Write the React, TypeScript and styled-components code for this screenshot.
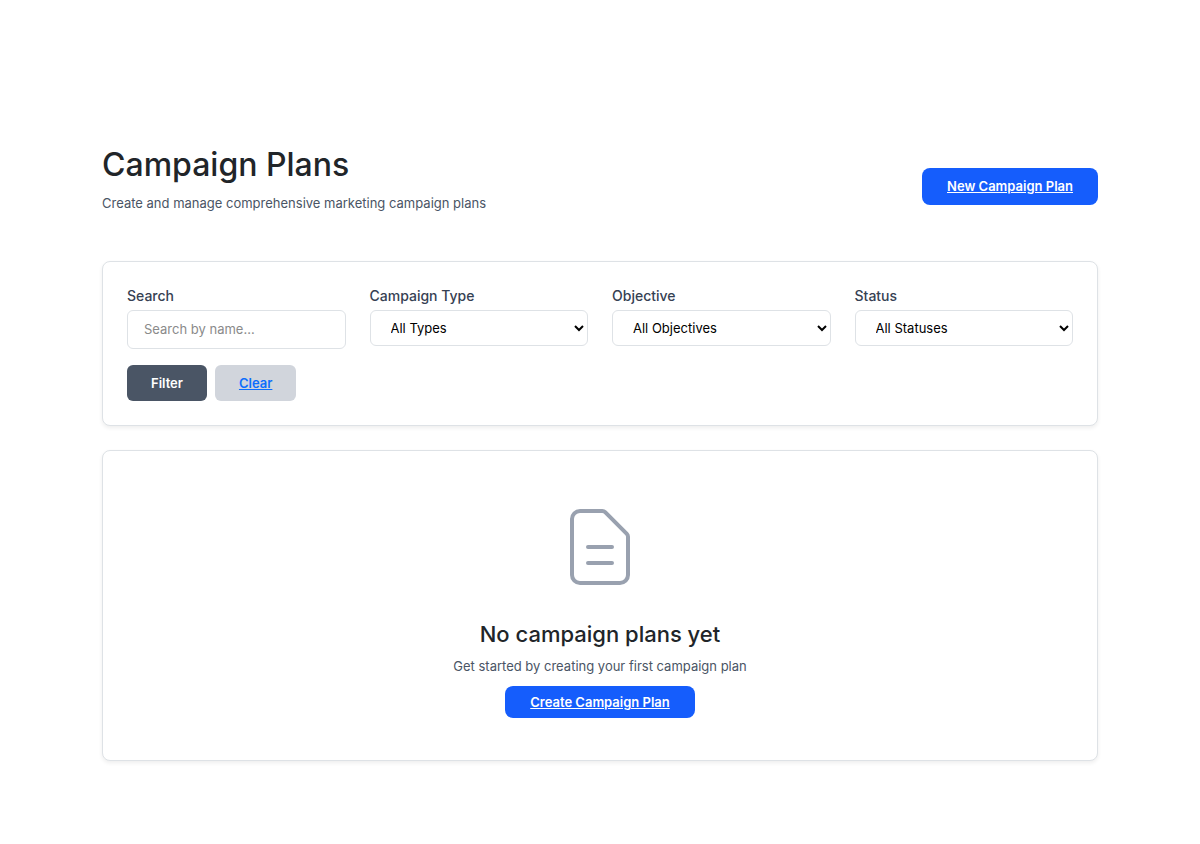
import React from 'react';
import styled, { createGlobalStyle, css } from 'styled-components';

const GlobalStyle = createGlobalStyle`
  *, *::before, *::after { box-sizing: border-box; }
  body {
    margin: 0;
    background: #fff;
    color: #212529;
    font-family: Inter, "Liberation Sans", sans-serif;
    font-size: 14px;
    line-height: 20px;
  }
`;

const Page = styled.main`
  max-width: 1200px;
  margin: 0 auto;
  padding: 144px 102px 83px;
`;

const Header = styled.header`
  display: flex;
  align-items: center;
  justify-content: space-between;
  margin-bottom: 32px;
`;

const Heading = styled.div`
  padding-bottom: 16px;
`;

const Title = styled.h1`
  margin: 0 0 8px;
  font-size: 32px;
  line-height: 41px;
  font-weight: 500;
`;

const Lead = styled.p`
  margin: 0;
  font-size: 13px;
  line-height: 20px;
  color: #4a5565;
`;

const Card = styled.section`
  background: #fff;
  border: 1px solid #dee2e6;
  border-radius: 8px;
  box-shadow: 0 2px 4px rgba(0, 0, 0, 0.07);
`;

const FilterCard = styled(Card)`
  padding: 24px;
  margin-bottom: 24px;
`;

const Fields = styled.div`
  display: grid;
  grid-template-columns: repeat(4, minmax(0, 1fr));
  gap: 24px;
  align-items: start;
  margin-bottom: 16px;
`;

const Label = styled.label`
  display: block;
  margin-bottom: 4px;
  font-size: 14px;
  line-height: 20px;
  font-weight: 500;
  color: #364153;
`;

const control = css`
  display: block;
  width: 100%;
  border: 1px solid #dee2e6;
  border-radius: 6px;
  background: #fff;
  font-family: inherit;
  font-size: 13px;
  color: #000;
`;

const TextInput = styled.input`
  ${control}
  height: 39px;
  padding: 8px 16px 10px;
  &::placeholder { color: #8a8a8a; }
`;

const Select = styled.select`
  ${control}
  height: 36px;
  padding: 0 0 0 16px;
`;

const Actions = styled.div`
  display: flex;
  gap: 8px;
`;

const buttonStyle = css`
  display: inline-block;
  padding: 8px 24px;
  border: 0;
  border-radius: 6px;
  font-family: inherit;
  font-size: 13px;
  line-height: 20px;
  font-weight: 600;
  cursor: pointer;
`;

const FilterButton = styled.button`
  ${buttonStyle}
  background: #4a5565;
  color: #fff;
`;

const ClearLink = styled.a`
  ${buttonStyle}
  background: #d1d5dc;
  color: #0d6efd;
`;

const PrimaryLink = styled.a<{ $compact?: boolean }>`
  ${buttonStyle}
  padding: ${(p) => (p.$compact ? '6px 25px' : '8px 25px 9px')};
  border-radius: 8px;
  background: #155dfc;
  color: #fff;
`;

const EmptyCard = styled(Card)`
  display: flex;
  flex-direction: column;
  align-items: center;
  padding: 48px 24px 42px;
  text-align: center;
`;

const DocumentIcon = styled.svg`
  width: 96px;
  height: 96px;
  margin-bottom: 24px;
`;

const EmptyTitle = styled.h2`
  margin: 0 0 7px;
  font-size: 22px;
  line-height: 30px;
  font-weight: 500;
`;

const EmptyText = styled(Lead)`
  margin-bottom: 10px;
`;

const filters = [
  { id: 'type', label: 'Campaign Type', option: 'All Types' },
  { id: 'objective', label: 'Objective', option: 'All Objectives' },
  { id: 'status', label: 'Status', option: 'All Statuses' },
];

export default function App() {
  return (
    <>
      <GlobalStyle />
      <Page>
        <Header>
          <Heading>
            <Title>Campaign Plans</Title>
            <Lead>Create and manage comprehensive marketing campaign plans</Lead>
          </Heading>
          <PrimaryLink href="#new">New Campaign Plan</PrimaryLink>
        </Header>

        <FilterCard as="form">
          <Fields>
            <div>
              <Label htmlFor="search">Search</Label>
              <TextInput id="search" type="text" placeholder="Search by name..." />
            </div>
            {filters.map((f) => (
              <div key={f.id}>
                <Label htmlFor={f.id}>{f.label}</Label>
                <Select id={f.id}>
                  <option>{f.option}</option>
                </Select>
              </div>
            ))}
          </Fields>
          <Actions>
            <FilterButton type="button">Filter</FilterButton>
            <ClearLink href="#clear">Clear</ClearLink>
          </Actions>
        </FilterCard>

        <EmptyCard>
          <DocumentIcon viewBox="0 0 24 24" fill="none" stroke="#99a1af" aria-hidden="true">
            <path
              strokeLinecap="round"
              strokeLinejoin="round"
              d="M9 12h6m-6 4h6m2 5H7a2 2 0 01-2-2V5a2 2 0 012-2h5.586a1 1 0 01.707.293l5.414 5.414a1 1 0 01.293.707V19a2 2 0 01-2 2z"
            />
          </DocumentIcon>
          <EmptyTitle>No campaign plans yet</EmptyTitle>
          <EmptyText>Get started by creating your first campaign plan</EmptyText>
          <PrimaryLink href="#create" $compact>Create Campaign Plan</PrimaryLink>
        </EmptyCard>
      </Page>
    </>
  );
}
